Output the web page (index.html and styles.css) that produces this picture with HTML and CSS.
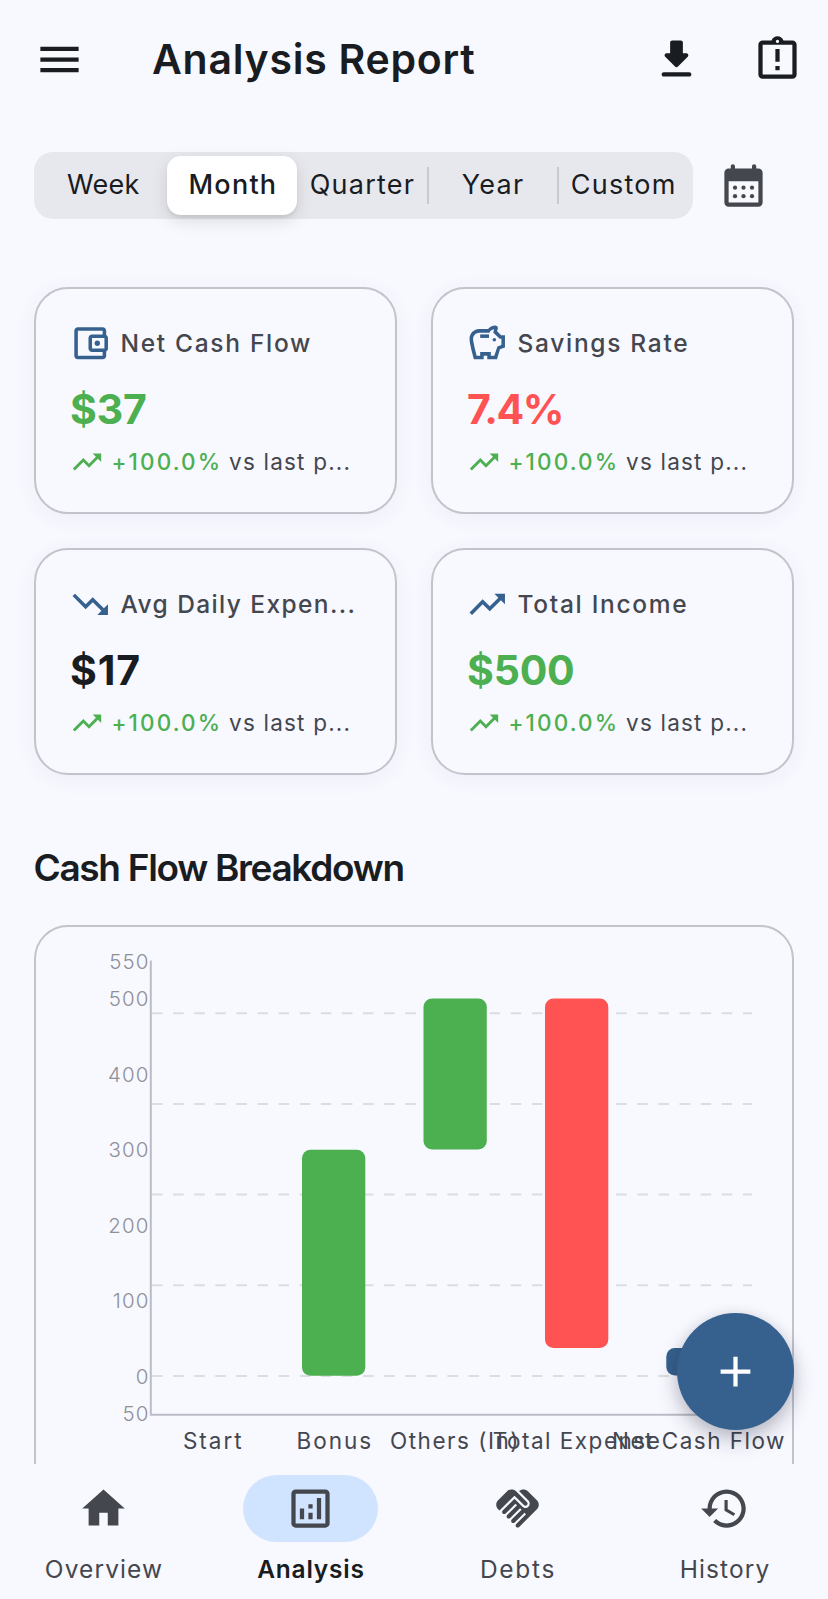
FILE: index.html
```
<!DOCTYPE html>
<html lang="en">
<head>
    <meta charset="UTF-8">
    <meta name="viewport" content="width=device-width, initial-scale=1.0">
    <title>Analysis Report</title>
    <link rel="stylesheet" href="styles.css">
</head>
<body>
    <div class="app">
        <header class="header">
            <svg class="icon" viewBox="0 0 24 24"><path d="M3 18h18v-2H3v2zm0-5h18v-2H3v2zm0-7v2h18V6H3z"/></svg>
            <h1>Analysis Report</h1>
            <svg class="icon" viewBox="0 0 24 24"><path d="M16.59 9H15V4c0-.55-.45-1-1-1h-4c-.55 0-1 .45-1 1v5H7.41c-.89 0-1.34 1.08-.71 1.71l4.59 4.59c.39.39 1.02.39 1.41 0l4.59-4.59c.63-.63.19-1.71-.7-1.71zM5 19c0 .55.45 1 1 1h12c.55 0 1-.45 1-1s-.45-1-1-1H6c-.55 0-1 .45-1 1z"/></svg>
            <svg class="icon" viewBox="0 0 24 24"><path d="M11 15h2v2h-2zm0-8h2v6h-2zm8-4h-4.18C14.4 1.84 13.3 1 12 1s-2.4.84-2.82 2H5c-1.1 0-2 .9-2 2v14c0 1.1.9 2 2 2h14c1.1 0 2-.9 2-2V5c0-1.1-.9-2-2-2zm-7-.25c.41 0 .75.34.75.75s-.34.75-.75.75-.75-.34-.75-.75.34-.75.75-.75zM19 19H5V5h14v14z"/></svg>
        </header>

        <main class="content">
            <div class="filter">
                <div class="tabs">
                    <div class="tab tab-week">Week</div>
                    <div class="tab active">Month</div>
                    <div class="tab">Quarter</div>
                    <div class="tab divided">Year</div>
                    <div class="tab divided">Custom</div>
                </div>
                <svg class="icon calendar" viewBox="0 0 24 24">
                    <path fill-rule="evenodd" d="M8 4h8V3c0-.55.45-1 1-1s1 .45 1 1v1h1c1.1 0 2 .9 2 2v14c0 1.1-.9 2-2 2H5c-1.1 0-2-.9-2-2V6c0-1.1.9-2 2-2h1V3c0-.55.45-1 1-1s1 .45 1 1v1zM5 10v10h14V10H5z"/>
                    <circle cx="8" cy="13" r="1"/><circle cx="12" cy="13" r="1"/><circle cx="16" cy="13" r="1"/>
                    <circle cx="8" cy="17" r="1"/><circle cx="12" cy="17" r="1"/><circle cx="16" cy="17" r="1"/>
                </svg>
            </div>

            <div class="cards">
                <div class="card">
                    <div class="card-title">
                        <svg viewBox="0 0 24 24"><path d="M21 7.28V5c0-1.1-.9-2-2-2H5c-1.11 0-2 .9-2 2v14c0 1.1.89 2 2 2h14c1.1 0 2-.9 2-2v-2.28c.59-.35 1-.98 1-1.72V9c0-.74-.41-1.37-1-1.72zM20 9v6h-7V9h7zM5 19V5h14v2h-6c-1.1 0-2 .9-2 2v6c0 1.1.9 2 2 2h6v2H5z"/><circle cx="16" cy="12" r="1.5"/></svg>
                        <span>Net Cash Flow</span>
                    </div>
                    <div class="value green">$37</div>
                    <div class="trend">
                        <svg viewBox="0 0 24 24"><path d="M16 6l2.29 2.29-4.88 4.88-4-4L2 16.59 3.41 18l6-6 4 4 6.3-6.29L22 12V6z"/></svg>
                        <span class="change">+100.0%</span><span class="versus">vs last p...</span>
                    </div>
                </div>
                <div class="card">
                    <div class="card-title">
                        <svg viewBox="0 0 24 24"><path d="M19.83 7.5l-2.27-2.27c.07-.42.18-.81.32-1.15.08-.18.12-.37.12-.58 0-.83-.67-1.5-1.5-1.5-1.64 0-3.09.79-4 2h-5C4.46 4 2 6.46 2 9.5S4.5 21 4.5 21H10v-2h2v2h5.5l1.68-5.59 2.82-.94V7.5h-2.17zM20 13.03l-2.25.75L16.01 19H14v-2H8v2H6.01C5.27 16.22 4 11.23 4 9.5 4 7.57 5.57 6 7.5 6h5.8c.1-.41.49-1.5 2.56-1.93-.1.32-.35 1.2-.41 2L19 9.5h1v3.53z"/><path d="M8 7h5v2H8z"/><circle cx="16" cy="10" r="1"/></svg>
                        <span>Savings Rate</span>
                    </div>
                    <div class="value red percent">7.4%</div>
                    <div class="trend">
                        <svg viewBox="0 0 24 24"><path d="M16 6l2.29 2.29-4.88 4.88-4-4L2 16.59 3.41 18l6-6 4 4 6.3-6.29L22 12V6z"/></svg>
                        <span class="change">+100.0%</span><span class="versus">vs last p...</span>
                    </div>
                </div>
                <div class="card">
                    <div class="card-title">
                        <svg viewBox="0 0 24 24"><path d="M16 18l2.29-2.29-4.88-4.88-4 4L2 7.41 3.41 6l6 6 4-4 6.3 6.29L22 12v6z"/></svg>
                        <span class="long">Avg Daily Expen...</span>
                    </div>
                    <div class="value daily">$17</div>
                    <div class="trend">
                        <svg viewBox="0 0 24 24"><path d="M16 6l2.29 2.29-4.88 4.88-4-4L2 16.59 3.41 18l6-6 4 4 6.3-6.29L22 12V6z"/></svg>
                        <span class="change">+100.0%</span><span class="versus">vs last p...</span>
                    </div>
                </div>
                <div class="card">
                    <div class="card-title">
                        <svg viewBox="0 0 24 24"><path d="M16 6l2.29 2.29-4.88 4.88-4-4L2 16.59 3.41 18l6-6 4 4 6.3-6.29L22 12V6z"/></svg>
                        <span>Total Income</span>
                    </div>
                    <div class="value green">$500</div>
                    <div class="trend">
                        <svg viewBox="0 0 24 24"><path d="M16 6l2.29 2.29-4.88 4.88-4-4L2 16.59 3.41 18l6-6 4 4 6.3-6.29L22 12V6z"/></svg>
                        <span class="change">+100.0%</span><span class="versus">vs last p...</span>
                    </div>
                </div>
            </div>

            <h2>Cash Flow Breakdown</h2>

            <div class="chart-card">
                <svg class="chart" viewBox="36 927 756 600">
                    <!-- Grid -->
                    <g class="grid">
                        <path d="M152 1013.3H752"/>
                        <path d="M152 1104H752"/>
                        <path d="M152 1194.6H752"/>
                        <path d="M152 1285.3H752"/>
                        <path d="M152 1375.9H752"/>
                    </g>
                    <path class="axis" d="M150.8 960.5V1414.7H752"/>

                    <!-- Bars -->
                    <rect class="up" x="302" y="1149.7" width="63.3" height="226" rx="8.5"/>
                    <rect class="up" x="423.5" y="998.5" width="63.3" height="151" rx="8.5"/>
                    <rect class="down" x="545" y="998.5" width="63.3" height="349.5" rx="8.5"/>
                    <rect class="net" x="666.3" y="1348" width="63.3" height="27.5" rx="8.5"/>

                    <g class="y-labels">
                        <text x="149.5" y="968.5">550</text>
                        <text x="149.5" y="1005.8">500</text>
                        <text x="149.5" y="1081.6">400</text>
                        <text x="149.5" y="1156.8">300</text>
                        <text x="149.5" y="1232.5">200</text>
                        <text x="149.5" y="1307.6">100</text>
                        <text x="149.5" y="1383.5">0</text>
                        <text x="149.5" y="1421.3">50</text>
                    </g>
                    <g class="x-labels">
                        <text class="wide" x="213.3" y="1449.3">Start</text>
                        <text class="wide" x="334.8" y="1449.3">Bonus</text>
                        <text x="455" y="1449.3">Others (In)</text>
                        <text x="577" y="1449.3">Total Expense</text>
                        <text x="699" y="1449.3">Net Cash Flow</text>
                    </g>
                </svg>
            </div>
        </main>

        <button class="fab">
            <svg class="icon" viewBox="0 0 24 24"><path d="M19 13h-6v6h-2v-6H5v-2h6V5h2v6h6v2z"/></svg>
        </button>

        <nav class="nav">
            <div class="nav-item">
                <div class="pill"><svg class="icon" viewBox="0 0 24 24"><path d="M10 20v-6h4v6h5v-8h3L12 3 2 12h3v8z"/></svg></div>
                <span>Overview</span>
            </div>
            <div class="nav-item selected">
                <div class="pill"><svg class="icon" viewBox="0 0 24 24"><path d="M19 3H5c-1.1 0-2 .9-2 2v14c0 1.1.9 2 2 2h14c1.1 0 2-.9 2-2V5c0-1.1-.9-2-2-2zm0 16H5V5h14v14zM7 12h2v5H7zM15 7h2v10h-2zM11 14h2v3h-2zM11 10h2v2h-2z"/></svg></div>
                <span>Analysis</span>
            </div>
            <div class="nav-item">
                <div class="pill"><svg class="icon" viewBox="0 0 24 24"><path d="M16.48 10.41c-.39.39-1.04.39-1.43 0l-4.47-4.46-7.05 7.04-.66-.63c-1.17-1.17-1.17-3.07 0-4.24l4.24-4.24c1.17-1.17 3.07-1.17 4.24 0L16.48 9c.39.39.39 1.02 0 1.41zm.7-2.12c.78.78.78 2.05 0 2.83-1.27 1.27-2.61.22-2.83 0l-3.76-3.76-5.57 5.57c-.39.39-.39 1.02 0 1.41s1.02.39 1.42 0l4.62-4.62.71.71-4.62 4.62c-.39.39-.39 1.02 0 1.41s1.02.39 1.42 0l4.62-4.62.71.71-4.62 4.62c-.39.39-.39 1.02 0 1.41.39.39 1.02.39 1.41 0l4.62-4.62.71.71-4.62 4.62c-.39.39-.39 1.02 0 1.41.39.39 1.02.39 1.41 0l8.32-8.34c1.17-1.17 1.17-3.07 0-4.24l-4.24-4.24c-1.15-1.15-3.01-1.17-4.18-.06l4.47 4.47z"/></svg></div>
                <span class="short">Debts</span>
            </div>
            <div class="nav-item">
                <div class="pill"><svg class="icon" viewBox="0 0 24 24"><path d="M13 3c-4.97 0-9 4.03-9 9H1l3.89 3.89.07.14L9 12H6c0-3.87 3.13-7 7-7s7 3.13 7 7-3.13 7-7 7c-1.93 0-3.68-.79-4.94-2.06l-1.42 1.42C8.27 19.99 10.51 21 13 21c4.97 0 9-4.03 9-9s-4.03-9-9-9zm-1 5v5l4.28 2.54.72-1.21-3.5-2.08V8H12z"/></svg></div>
                <span>History</span>
            </div>
        </nav>
    </div>
</body>
</html>
```
FILE: styles.css
```
* {
    box-sizing: border-box;
}
body {
    margin: 0;
    background: #f8f8ff;
    color: #191c20;
    font-family: Inter, "Liberation Sans", sans-serif;
}
.app {
    position: relative;
    display: flex;
    flex-direction: column;
    height: 1599px;
    overflow: hidden;
}
.icon {
    width: 51px;
    height: 51px;
    flex: none;
    fill: currentColor;
}
/* Header */
.header {
    display: flex;
    align-items: center;
    height: 118px;
    padding: 0 25.5px 0 33.5px;
}
.header h1 {
    flex: 1;
    margin: 0 0 0 67.5px;
    font-size: 41px;
    font-weight: 600;
    line-height: 51px;
    letter-spacing: 0.75px;
}
.header .icon + .icon {
    margin-left: 50px;
}
.content {
    height: 1346px;
    padding: 34px 34px 0;
    overflow: hidden;
}
/* Period filter */
.filter {
    display: flex;
    align-items: center;
}
.tabs {
    display: flex;
    width: 659px;
    height: 67px;
    padding: 4px 5px;
    border-radius: 19px;
    background: #e7e7ee;
}
.tab {
    display: flex;
    flex: 1;
    align-items: center;
    justify-content: center;
    padding: 0 0 2px 2px;
    font-size: 27px;
    letter-spacing: 1.25px;
}
.tab-week {
    padding-left: 0;
    letter-spacing: 0.3px;
}
.tab.active {
    margin: 0 -1px;
    border-radius: 14px;
    background: #fff;
    box-shadow: 0 6px 17px rgba(0, 0, 0, 0.12), 0 3px 3px rgba(0, 0, 0, 0.06);
    font-weight: 500;
}
.tab.divided {
    background: linear-gradient(#c9c9d1, #c9c9d1) 0 11px / 2px 37px no-repeat;
}
.calendar {
    margin-left: 25px;
    color: #44474e;
}
/* Summary cards */
.cards {
    display: grid;
    grid-template-columns: 363px 363px;
    gap: 34px;
    margin-top: 68px;
}
.card {
    height: 227px;
    padding: 33px 33px 0 34px;
    border: 2px solid #c2c3cb;
    border-radius: 34px;
    background: #f8f8ff;
    box-shadow: 0 4px 21px rgba(50, 80, 140, 0.06);
    white-space: nowrap;
}
.card-title {
    display: flex;
    align-items: center;
    gap: 9px;
    color: #44474e;
    font-size: 24.5px;
    font-weight: 500;
    letter-spacing: 1.7px;
}
.card-title svg {
    width: 42.5px;
    height: 42.5px;
    margin-left: -1px;
    fill: #36618e;
}
.card-title .long {
    letter-spacing: 1.4px;
}
.value {
    margin-top: 18.5px;
    font-size: 41px;
    font-weight: 700;
    line-height: 52px;
    letter-spacing: -0.2px;
}
.percent {
    letter-spacing: -1.5px;
}
.daily {
    letter-spacing: 0.9px;
}
.green {
    color: #4caf50;
}
.red {
    color: #ff5252;
}
.trend {
    display: flex;
    align-items: center;
    margin-top: 9.5px;
    color: #44474e;
    font-size: 22.5px;
}
.trend svg {
    width: 34px;
    height: 34px;
    margin-right: 8px;
    margin-left: -0.5px;
    fill: #4caf50;
}
.change {
    margin-right: 7px;
    color: #4caf50;
    font-weight: 500;
    letter-spacing: 2.1px;
}
.versus {
    letter-spacing: 1.2px;
}
/* Chart */
h2 {
    margin: 70px 0 34px -0.5px;
    font-size: 37px;
    font-weight: 600;
    line-height: 46px;
    letter-spacing: -1.32px;
}
.chart-card {
    width: 760px;
    height: 640px;
    border: 2px solid #c2c3cb;
    border-radius: 34px;
}
.chart {
    display: block;
    width: 756px;
    height: 600px;
}
.grid path {
    fill: none;
    stroke: #dcdde3;
    stroke-width: 2;
    stroke-dasharray: 10.6 10.5;
}
.axis {
    fill: none;
    stroke: #bbbcc5;
    stroke-width: 2;
}
.up {
    fill: #4caf50;
}
.down {
    fill: #ff5252;
}
.net {
    fill: #36618e;
}
.y-labels {
    fill: #8e9097;
    font-size: 20.5px;
    font-weight: 300;
    letter-spacing: 1.1px;
    text-anchor: end;
}
.x-labels {
    fill: #44474e;
    font-size: 22.5px;
    letter-spacing: 1.5px;
    text-anchor: middle;
}
.x-labels .wide {
    letter-spacing: 2px;
}
/* Floating button */
.fab {
    position: absolute;
    top: 1313px;
    right: 34px;
    display: flex;
    align-items: center;
    justify-content: center;
    width: 117px;
    height: 117px;
    padding: 0;
    border: none;
    border-radius: 50%;
    background: #36618e;
    color: #fff;
    box-shadow: 0 10px 22px rgba(25, 28, 50, 0.22), 0 3px 14px rgba(25, 28, 50, 0.12);
}
/* Bottom navigation */
.nav {
    display: flex;
    flex: 1;
    padding-top: 11px;
}
.nav-item {
    display: flex;
    flex: 1;
    flex-direction: column;
    align-items: center;
    color: #44474e;
    font-size: 24.5px;
    line-height: 32px;
    letter-spacing: 1.1px;
}
.nav-item span {
    padding-left: 1px;
}
.pill {
    display: flex;
    align-items: center;
    justify-content: center;
    width: 135px;
    height: 67px;
    margin-bottom: 11px;
    border-radius: 34px;
}
.selected .pill {
    background: #d1e4ff;
}
.selected span {
    color: #191c20;
    font-weight: 600;
    letter-spacing: 0.8px;
}
.nav .short {
    letter-spacing: 1.7px;
}
```
